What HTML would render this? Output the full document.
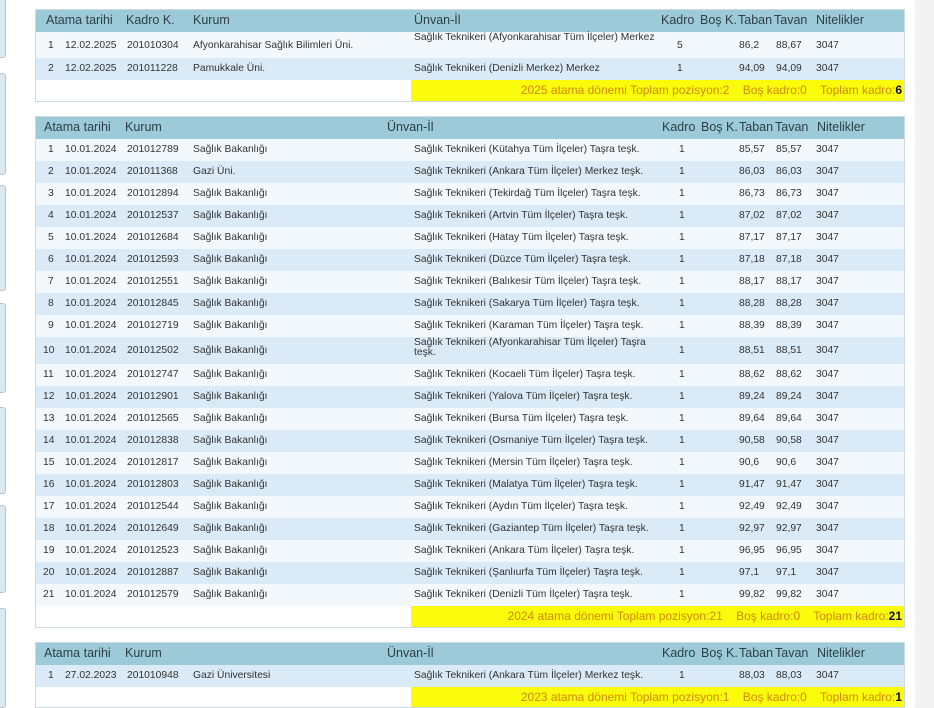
<!DOCTYPE html>
<html><head><meta charset="utf-8"><style>
*{margin:0;padding:0;box-sizing:border-box}
body{width:934px;height:708px;overflow:hidden;background:#fff;font-family:"Liberation Sans","DejaVu Sans",sans-serif;color:#333;position:relative}
.strip{position:absolute;left:915px;top:0;width:19px;height:708px;background:#f3f3f3}
.lp{position:absolute;left:-6px;width:12px;background:#dbe9f5;border:1px solid #b9c6cf;border-radius:3px}
.tb{position:absolute;left:35px;width:870px;border:1px solid #c9dce3}
.hd{position:relative;height:22px;background:#9ccad8;font-size:12.5px;color:#2d3f47}
.hd span,.r span{position:absolute;white-space:nowrap}
.hd span{top:3px}
.r{position:relative;height:22px;font-size:10.3px;color:#333}
.r span{top:5px}
.r:nth-child(odd){background:#daeaf7}
.r:nth-child(even){background:#f3f8fc}
.r.t span.u{top:1px;line-height:10px;width:248px;white-space:normal}
.ft{position:relative;height:21px;background:#fff}
.ft div{position:absolute;left:375px;right:0;top:0;bottom:0;background:#fbfb0c;color:#d08a00;font-size:12px;text-align:right;padding:3px 2px 0 0;white-space:pre}
.ft b{color:#111}
</style></head><body>
<div class="strip"></div>
<div class="lp" style="top:-4px;height:62px"></div>
<div class="lp" style="top:73px;height:102px"></div>
<div class="lp" style="top:185px;height:106px"></div>
<div class="lp" style="top:303px;height:90px"></div>
<div class="lp" style="top:407px;height:87px"></div>
<div class="lp" style="top:505px;height:88px"></div>
<div class="lp" style="top:608px;height:100px"></div>

<div class="tb" style="top:9px">
<div class="hd"><span style="left:10px">Atama tarihi</span><span style="left:90px">Kadro K.</span><span style="left:157px">Kurum</span><span style="left:378px">Ünvan-İl</span><span style="left:625px">Kadro</span><span style="left:664px">Boş K.</span><span style="left:702px">Taban</span><span style="left:738px">Tavan</span><span style="left:780px">Nitelikler</span></div>
<div>
<div class="r t" style="height:26px;background:#f3f8fc"><span style="left:12px;top:8px">1</span><span style="left:29px;top:8px">12.02.2025</span><span style="left:91px;top:8px">201010304</span><span style="left:157px;top:8px">Afyonkarahisar Sağlık Bilimleri Üni.</span><span class="u" style="left:378px">Sağlık Teknikeri (Afyonkarahisar Tüm İlçeler) Merkez</span><span style="left:641px;top:8px">5</span><span style="left:703px;top:8px">86,2</span><span style="left:740px;top:8px">88,67</span><span style="left:780px;top:8px">3047</span></div>
<div class="r" style="background:#daeaf7"><span style="left:12px">2</span><span style="left:29px">12.02.2025</span><span style="left:91px">201011228</span><span style="left:157px">Pamukkale Üni.</span><span style="left:378px">Sağlık Teknikeri (Denizli Merkez) Merkez</span><span style="left:641px">1</span><span style="left:703px">94,09</span><span style="left:740px">94,09</span><span style="left:780px">3047</span></div>
</div>
<div class="ft"><div>2025 atama dönemi Toplam pozisyon:2    Boş kadro:0    Toplam kadro:<b>6</b></div></div>
</div>

<div class="tb" style="top:116px">
<div class="hd"><span style="left:8px">Atama tarihi</span><span style="left:89px">Kurum</span><span style="left:351px">Ünvan-İl</span><span style="left:626px">Kadro</span><span style="left:665px">Boş K.</span><span style="left:703px">Taban</span><span style="left:739px">Tavan</span><span style="left:781px">Nitelikler</span></div>
<div id="b2"></div>
<div class="ft"><div>2024 atama dönemi Toplam pozisyon:21    Boş kadro:0    Toplam kadro:<b>21</b></div></div>
</div>

<div class="tb" style="top:642px">
<div class="hd"><span style="left:8px">Atama tarihi</span><span style="left:89px">Kurum</span><span style="left:351px">Ünvan-İl</span><span style="left:626px">Kadro</span><span style="left:665px">Boş K.</span><span style="left:703px">Taban</span><span style="left:739px">Tavan</span><span style="left:781px">Nitelikler</span></div>
<div class="r" style="background:#daeaf7"><span style="left:12px">1</span><span style="left:29px">27.02.2023</span><span style="left:91px">201010948</span><span style="left:157px">Gazi Üniversitesi</span><span style="left:378px">Sağlık Teknikeri (Ankara Tüm İlçeler) Merkez teşk.</span><span style="left:643px">1</span><span style="left:703px">88,03</span><span style="left:740px">88,03</span><span style="left:780px">3047</span></div>
<div class="ft" style="height:20px"><div>2023 atama dönemi Toplam pozisyon:1    Boş kadro:0    Toplam kadro:<b>1</b></div></div>
</div>

<div style="display:none" id="src"></div>
<script>
var d=[["201012789","Sağlık Bakanlığı","Kütahya Tüm İlçeler) Taşra teşk.","85,57"],
["201011368","Gazi Üni.","Ankara Tüm İlçeler) Merkez teşk.","86,03"],
["201012894","Sağlık Bakanlığı","Tekirdağ Tüm İlçeler) Taşra teşk.","86,73"],
["201012537","Sağlık Bakanlığı","Artvin Tüm İlçeler) Taşra teşk.","87,02"],
["201012684","Sağlık Bakanlığı","Hatay Tüm İlçeler) Taşra teşk.","87,17"],
["201012593","Sağlık Bakanlığı","Düzce Tüm İlçeler) Taşra teşk.","87,18"],
["201012551","Sağlık Bakanlığı","Balıkesir Tüm İlçeler) Taşra teşk.","88,17"],
["201012845","Sağlık Bakanlığı","Sakarya Tüm İlçeler) Taşra teşk.","88,28"],
["201012719","Sağlık Bakanlığı","Karaman Tüm İlçeler) Taşra teşk.","88,39"],
["201012502","Sağlık Bakanlığı","Afyonkarahisar Tüm İlçeler) Taşra teşk.","88,51"],
["201012747","Sağlık Bakanlığı","Kocaeli Tüm İlçeler) Taşra teşk.","88,62"],
["201012901","Sağlık Bakanlığı","Yalova Tüm İlçeler) Taşra teşk.","89,24"],
["201012565","Sağlık Bakanlığı","Bursa Tüm İlçeler) Taşra teşk.","89,64"],
["201012838","Sağlık Bakanlığı","Osmaniye Tüm İlçeler) Taşra teşk.","90,58"],
["201012817","Sağlık Bakanlığı","Mersin Tüm İlçeler) Taşra teşk.","90,6"],
["201012803","Sağlık Bakanlığı","Malatya Tüm İlçeler) Taşra teşk.","91,47"],
["201012544","Sağlık Bakanlığı","Aydın Tüm İlçeler) Taşra teşk.","92,49"],
["201012649","Sağlık Bakanlığı","Gaziantep Tüm İlçeler) Taşra teşk.","92,97"],
["201012523","Sağlık Bakanlığı","Ankara Tüm İlçeler) Taşra teşk.","96,95"],
["201012887","Sağlık Bakanlığı","Şanlıurfa Tüm İlçeler) Taşra teşk.","97,1"],
["201012579","Sağlık Bakanlığı","Denizli Tüm İlçeler) Taşra teşk.","99,82"]];
var h="";
d.forEach(function(x,i){var n=i+1,t=n==10;var tp=t?' style="top:8px"':'';
var tps=t?'top:8px;':'';
h+='<div class="r'+(t?' t':'')+'" style="'+(t?'height:27px;':'')+'background:'+(n%2?'#f3f8fc':'#daeaf7')+'"><span style="'+tps+'left:'+(n<10?12:7)+'px">'+n+'</span><span style="'+tps+'left:29px">10.01.2024</span><span style="'+tps+'left:91px">'+x[0]+'</span><span style="'+tps+'left:157px">'+x[1]+'</span><span class="u" style="left:378px">Sağlık Teknikeri ('+x[2]+'</span><span style="'+tps+'left:643px">1</span><span style="'+tps+'left:703px">'+x[3]+'</span><span style="'+tps+'left:740px">'+x[3]+'</span><span style="'+tps+'left:780px">3047</span></div>';});
document.getElementById("b2").innerHTML=h;
</script>
</body></html>
